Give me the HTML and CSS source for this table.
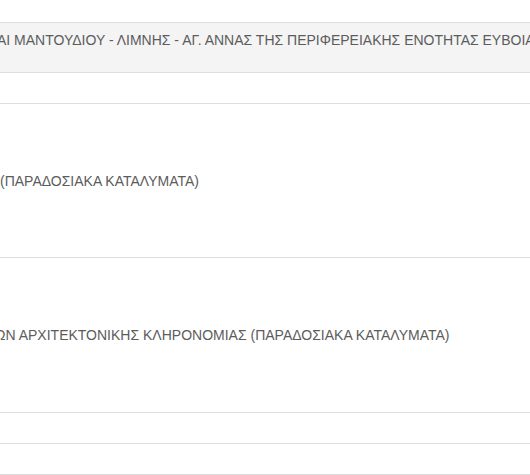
FILE: index.html
```html
<!DOCTYPE html>
<html lang="el">
<head>
<meta charset="utf-8">
<title>Πίνακας</title>
<link rel="stylesheet" href="styles.css">
</head>
<body>
<div class="table">
  <div class="row head"><span class="cell-text shift-a">ΑΙ ΜΑΝΤΟΥΔΙΟΥ - ΛΙΜΝΗΣ - ΑΓ. ΑΝΝΑΣ ΤΗΣ ΠΕΡΙΦΕΡΕΙΑΚΗΣ ΕΝΟΤΗΤΑΣ ΕΥΒΟΙΑΣ</span></div>
  <div class="row short"></div>
  <div class="row tall"><span class="cell-text shift-b">(ΠΑΡΑΔΟΣΙΑΚΑ ΚΑΤΑΛΥΜΑΤΑ)</span></div>
  <div class="row tall tall-2"><span class="cell-text shift-c">ΩΝ ΑΡΧΙΤΕΚΤΟΝΙΚΗΣ ΚΛΗΡΟΝΟΜΙΑΣ (ΠΑΡΑΔΟΣΙΑΚΑ ΚΑΤΑΛΥΜΑΤΑ)</span></div>
  <div class="row short"></div>
  <div class="row short"></div>
</div>
</body>
</html>
```
FILE: styles.css
```css
html, body {
  margin: 0;
  padding: 0;
  background: #ffffff;
}
body {
  font-family: "Liberation Sans", Arial, sans-serif;
  font-size: 14px;
  line-height: 20px;
  color: #5c5c5c;
  overflow: hidden;
  width: 530px;
  height: 475px;
}
.table {
  margin-top: 22px;
  border-top: 1px solid #dddddd;
  width: 530px;
  overflow: hidden;
}
.row {
  display: flex;
  box-sizing: border-box;
  border-bottom: 1px solid #dddddd;
  white-space: nowrap;
}
.head {
  background: #f4f4f4;
  height: 50px;
  align-items: flex-start;
  padding-top: 7px;
}
.short {
  height: 31px;
}
.tall {
  height: 154px;
  align-items: center;
}
.tall-2 {
  height: 155px;
}
.cell-text {
  display: block;
}
.shift-a {
  margin-left: -3px;
}
.shift-b {
  margin-left: 0;
}
.shift-c {
  margin-left: -5px;
}
```
